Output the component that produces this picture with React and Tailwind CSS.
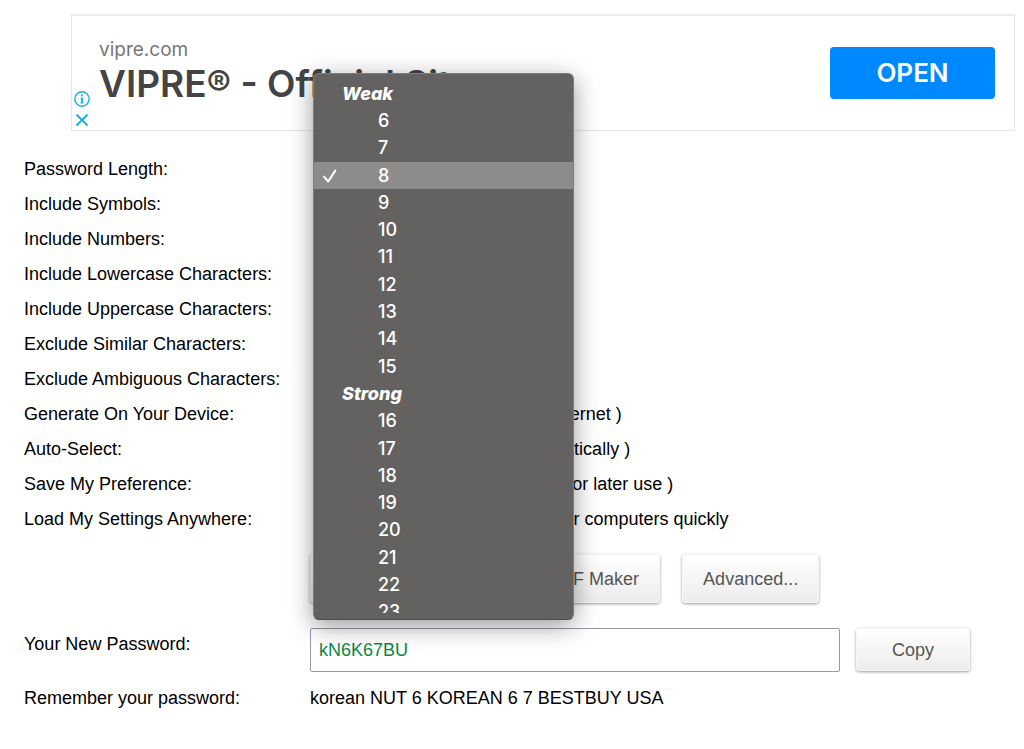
import { useState } from "react";

const LENGTH_MENU = [
  { heading: "Weak" },
  ...[6, 7, 8, 9, 10, 11, 12, 13, 14, 15].map((value) => ({ value })),
  { heading: "Strong" },
  ...[16, 17, 18, 19, 20, 21, 22, 23].map((value) => ({ value })),
];

const OPTIONS = [
  { id: "symbols", label: "Include Symbols:" },
  { id: "numbers", label: "Include Numbers:" },
  { id: "lowercase", label: "Include Lowercase Characters:" },
  { id: "uppercase", label: "Include Uppercase Characters:" },
  { id: "similar", label: "Exclude Similar Characters:" },
  { id: "ambiguous", label: "Exclude Ambiguous Characters:" },
  { id: "device", label: "Generate On Your Device:", hint: "( do NOT send across the Internet )" },
  { id: "autoselect", label: "Auto-Select:", hint: "( select the password automatically )" },
  { id: "save", label: "Save My Preference:", hint: "( save all the settings above for later use )" },
];

const rowClass = "grid grid-cols-[286px_1fr]";
const buttonClass =
  "rounded-sm border border-[#f6f6f6] bg-linear-to-b from-white to-[#ececec] text-[#555] shadow-[0_1px_3px_rgba(0,0,0,0.4)]";

function AdBanner() {
  return (
    <aside className="mt-[14px] mr-[9px] ml-[71px] flex h-[117px] border border-t-2 border-[#e6e6e6] border-t-[#ececec] font-['Inter',sans-serif]">
      <div className="flex flex-col justify-end gap-[3px] pb-px pl-px">
        <button aria-label="Ad information" className="text-[#12b5d5]">
          <svg width="18" height="18" viewBox="0 0 18 18" fill="none">
            <circle cx="9" cy="9" r="7.2" stroke="currentColor" strokeWidth="1.4" />
            <path d="M9 7.8V13" stroke="currentColor" strokeWidth="1.9" />
            <path d="M7.6 8.2H9M7.4 13h3.2" stroke="currentColor" strokeWidth="1" />
            <circle cx="9" cy="5.5" r="1.1" fill="currentColor" />
          </svg>
        </button>
        <button aria-label="Close ad" className="text-[#12b5d5]">
          <svg width="18" height="18" viewBox="0 0 18 18" fill="none">
            <path d="M3.5 3.5l11 11M14.5 3.5l-11 11" stroke="currentColor" strokeWidth="1.8" />
          </svg>
        </button>
      </div>
      <div className="min-w-0 flex-1 pt-5 pl-2">
        <p className="text-[19px] leading-7 text-[#777]">vipre.com</p>
        <p className="text-[37px] leading-10 font-semibold whitespace-nowrap text-[#444]">
          VIPRE® - Official Site
        </p>
      </div>
      <a
        href="#open"
        className="mt-[31px] mr-[19px] flex h-[52px] w-[165px] items-center justify-center rounded-sm bg-[#0088ff] text-[26px] font-semibold text-white"
      >
        OPEN
      </a>
    </aside>
  );
}

function LengthMenu({ value, onChange }) {
  return (
    <div className="absolute -top-[78px] left-[3px] z-10 h-[547px] w-[261px] rounded-md border border-[#7d7d7b] border-b-[#4d4b4a] bg-[#636260] pt-[6px] pb-[6px] shadow-[0_6px_24px_rgba(0,0,0,0.4)]">
      <div className="h-full overflow-hidden">
        <ul
          role="listbox"
          aria-label="Password Length"
          className="grid h-[546px] auto-rows-fr font-['Inter',sans-serif] text-lg font-medium text-white"
        >
          {LENGTH_MENU.map((item) =>
            item.heading ? (
              <li key={item.heading} role="presentation" className="flex items-center pl-7 font-extrabold italic">
                {item.heading}
              </li>
            ) : (
              <li
                key={item.value}
                role="option"
                aria-selected={item.value === value}
                onClick={() => onChange(item.value)}
                className={`flex items-center ${item.value === value ? "bg-[#8d8c8a]" : ""}`}
              >
                <span className="flex w-16 pl-2">
                  {item.value === value && (
                    <svg width="16" height="16" viewBox="0 0 16 16" fill="none">
                      <path
                        d="M2 8.7l4.2 4.8L13.3 2.6"
                        stroke="currentColor"
                        strokeWidth="2"
                        strokeLinecap="round"
                        strokeLinejoin="round"
                      />
                    </svg>
                  )}
                </span>
                {item.value}
              </li>
            )
          )}
        </ul>
      </div>
    </div>
  );
}

export default function App() {
  const [length, setLength] = useState(8);

  return (
    <div className="flow-root bg-white font-['Liberation_Sans',Arial,sans-serif] text-lg text-black">
      <AdBanner />

      <main className="mt-5 px-6">
        <div className={`${rowClass} h-[35px] items-center`}>
          <label htmlFor="length">Password Length:</label>
          <div className="relative h-full">
            <select
              id="length"
              value={length}
              onChange={(e) => setLength(Number(e.target.value))}
              className="ml-2 w-60"
            >
              {LENGTH_MENU.filter((item) => item.value).map((item) => (
                <option key={item.value} value={item.value}>
                  {item.value}
                </option>
              ))}
            </select>
            <LengthMenu value={length} onChange={setLength} />
          </div>
        </div>

        {OPTIONS.map((option) => (
          <div key={option.id} className={`${rowClass} h-[35px] items-center`}>
            <label htmlFor={option.id}>{option.label}</label>
            <div className="flex items-center gap-2 pl-2">
              <input id={option.id} type="checkbox" defaultChecked />
              {option.hint && <span>{option.hint}</span>}
            </div>
          </div>
        ))}

        <div className={`${rowClass} h-[35px] items-center`}>
          <span>Load My Settings Anywhere:</span>
          <span className="pl-2">URL to load my settings on other computers quickly</span>
        </div>

        <div className={`${rowClass} mt-[18px]`}>
          <div className="col-start-2 flex gap-[22px]">
            <button className={`${buttonClass} h-[49px] px-5`}>Generate Password</button>
            <button className={`${buttonClass} h-[49px] px-5`}>GIF Maker</button>
            <button className={`${buttonClass} h-[49px] px-5`}>Advanced...</button>
          </div>
        </div>

        <div className={`${rowClass} mt-[25px]`}>
          <label htmlFor="password" className="leading-8">
            Your New Password:
          </label>
          <div className="mr-[30px] flex gap-4">
            <input
              id="password"
              readOnly
              value="kN6K67BU"
              className="h-11 min-w-0 flex-1 rounded-xs border border-[#9796a5] bg-white px-2 text-[#0a8a48]"
            />
            <button className={`${buttonClass} h-[43px] w-[114px]`}>Copy</button>
          </div>
        </div>

        <div className={`${rowClass} mt-3 leading-7`}>
          <span>Remember your password:</span>
          <span>korean NUT 6 KOREAN 6 7 BESTBUY USA</span>
        </div>
      </main>
    </div>
  );
}
